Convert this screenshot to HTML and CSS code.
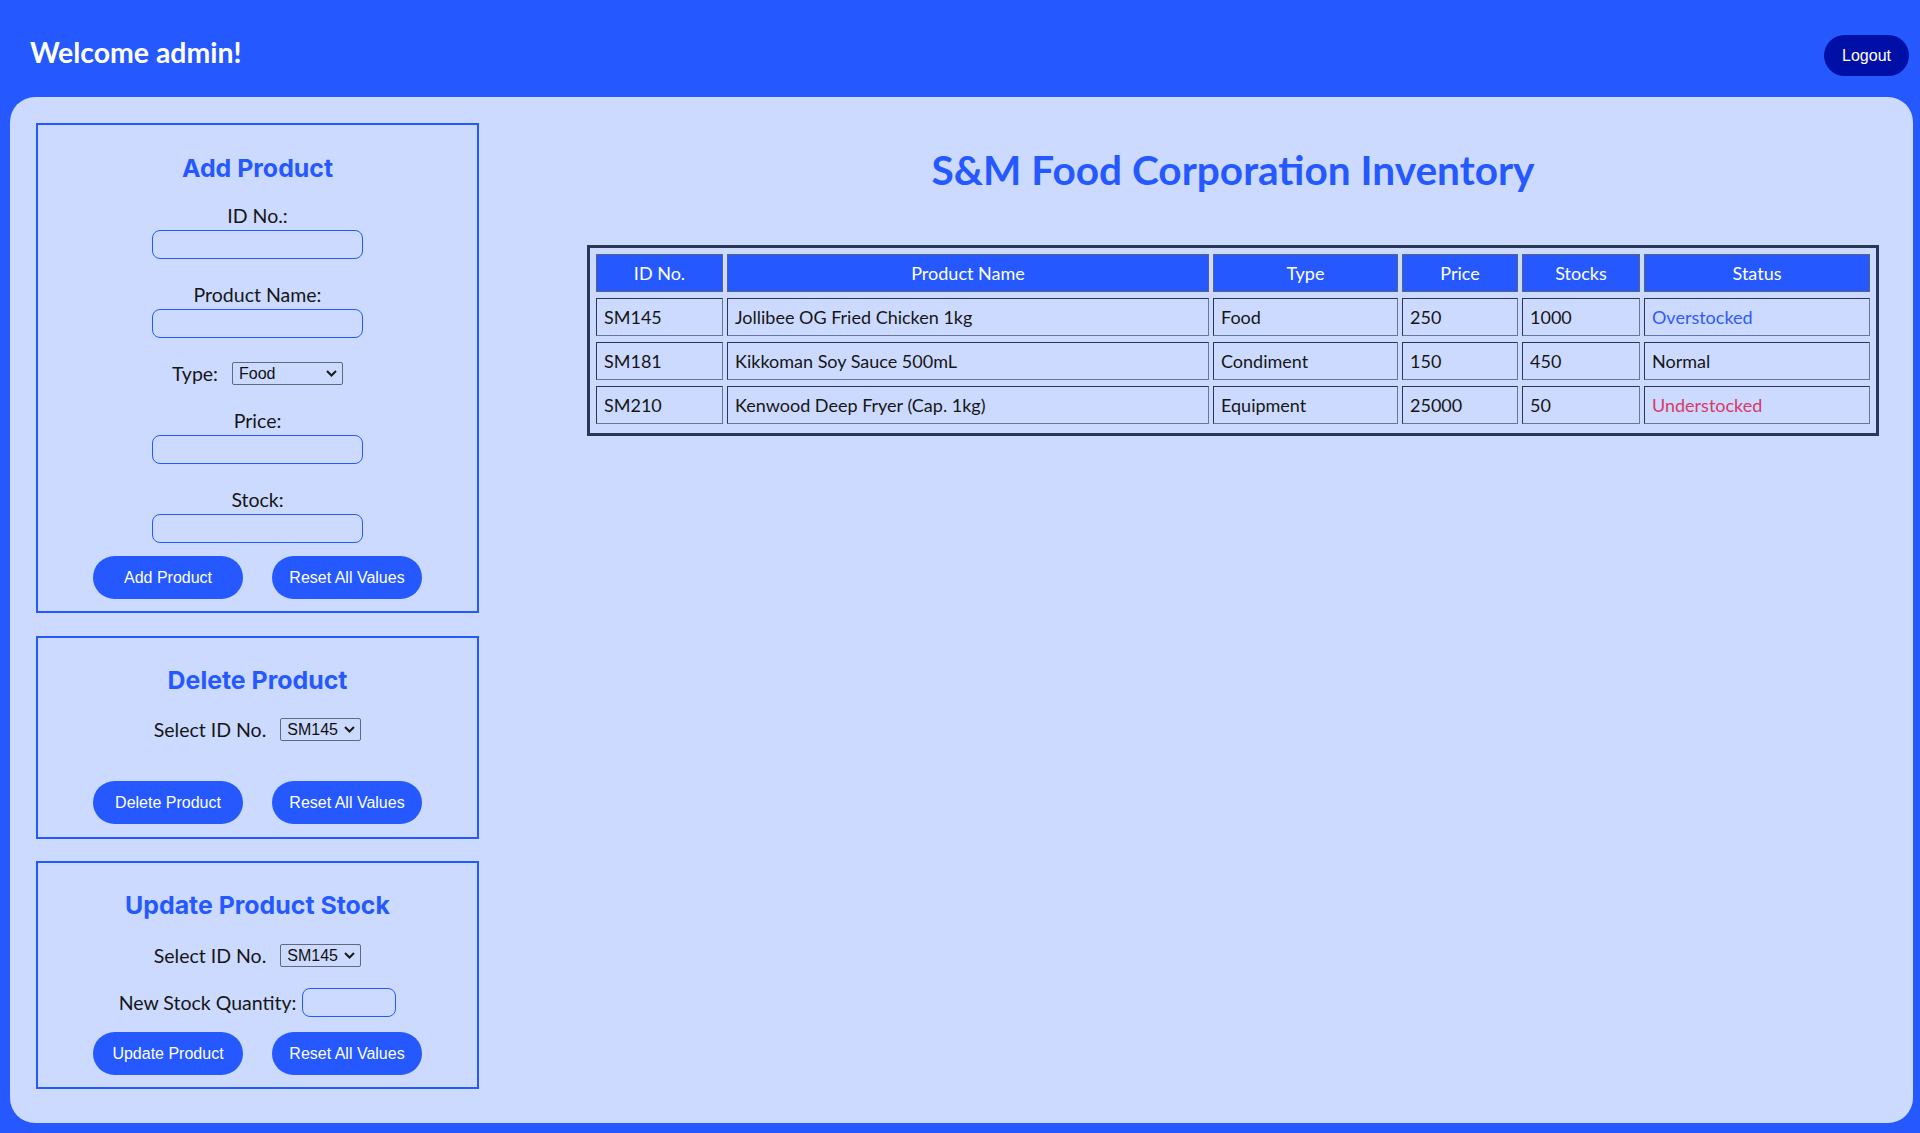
FILE: index.html
```html
<!DOCTYPE html>
<html lang="en">
<head>
<meta charset="utf-8">
<title>S&amp;M Food Corporation Inventory</title>
<link rel="stylesheet" href="styles.css">
</head>
<body>
<header class="topbar">
  <h1 class="welcome">Welcome admin!</h1>
  <button class="logout">Logout</button>
</header>
<main class="panel">
  <aside class="sidebar">
    <section class="card card-add">
      <h2 class="card-title title-add">Add Product</h2>
      <div class="field">
        <label class="field-label">ID No.:</label>
        <input class="text-input" type="text">
      </div>
      <div class="field spaced">
        <label class="field-label">Product Name:</label>
        <input class="text-input" type="text">
      </div>
      <div class="inline-row spaced">
        <label class="field-label">Type:</label>
        <span class="select-wrap">
          <select class="select select-type"><option>Food</option><option>Condiment</option><option>Equipment</option></select>
          <svg class="chevron" width="11" height="7" viewBox="0 0 11 7"><path d="M1 1l4.5 4.5L10 1" fill="none" stroke="#1a1a1a" stroke-width="2"/></svg>
        </span>
      </div>
      <div class="field spaced">
        <label class="field-label">Price:</label>
        <input class="text-input" type="text">
      </div>
      <div class="field spaced">
        <label class="field-label">Stock:</label>
        <input class="text-input" type="text">
      </div>
      <div class="actions actions-add">
        <button class="btn">Add Product</button>
        <button class="btn">Reset All Values</button>
      </div>
    </section>

    <section class="card card-delete">
      <h2 class="card-title">Delete Product</h2>
      <div class="inline-row row-select">
        <label class="field-label">Select ID No.</label>
        <span class="select-wrap">
          <select class="select select-id"><option>SM145</option><option>SM181</option><option>SM210</option></select>
          <svg class="chevron" width="11" height="7" viewBox="0 0 11 7"><path d="M1 1l4.5 4.5L10 1" fill="none" stroke="#1a1a1a" stroke-width="2"/></svg>
        </span>
      </div>
      <div class="actions actions-delete">
        <button class="btn">Delete Product</button>
        <button class="btn">Reset All Values</button>
      </div>
    </section>

    <section class="card card-update">
      <h2 class="card-title">Update Product Stock</h2>
      <div class="inline-row row-select-update">
        <label class="field-label">Select ID No.</label>
        <span class="select-wrap">
          <select class="select select-id"><option>SM145</option><option>SM181</option><option>SM210</option></select>
          <svg class="chevron" width="11" height="7" viewBox="0 0 11 7"><path d="M1 1l4.5 4.5L10 1" fill="none" stroke="#1a1a1a" stroke-width="2"/></svg>
        </span>
      </div>
      <div class="inline-row row-qty">
        <label class="field-label">New Stock Quantity:</label>
        <input class="qty-input" type="text">
      </div>
      <div class="actions actions-update">
        <button class="btn">Update Product</button>
        <button class="btn">Reset All Values</button>
      </div>
    </section>
  </aside>

  <section class="content">
    <h1 class="title">S&amp;M Food Corporation Inventory</h1>
    <table class="inventory">
      <thead>
        <tr>
          <th class="c-id">ID No.</th>
          <th class="c-name">Product Name</th>
          <th class="c-type">Type</th>
          <th class="c-price">Price</th>
          <th class="c-stock">Stocks</th>
          <th class="c-status">Status</th>
        </tr>
      </thead>
      <tbody>
        <tr>
          <td>SM145</td>
          <td>Jollibee OG Fried Chicken 1kg</td>
          <td>Food</td>
          <td>250</td>
          <td>1000</td>
          <td class="status-over">Overstocked</td>
        </tr>
        <tr>
          <td>SM181</td>
          <td>Kikkoman Soy Sauce 500mL</td>
          <td>Condiment</td>
          <td>150</td>
          <td>450</td>
          <td>Normal</td>
        </tr>
        <tr>
          <td>SM210</td>
          <td>Kenwood Deep Fryer (Cap. 1kg)</td>
          <td>Equipment</td>
          <td>25000</td>
          <td>50</td>
          <td class="status-under">Understocked</td>
        </tr>
      </tbody>
    </table>
  </section>
</main>
</body>
</html>
```
FILE: styles.css
```css
* { box-sizing: border-box; }

body {
  margin: 0;
  background: #2559ff;
  font-family: Lato, "Noto Sans", sans-serif;
  color: #161616;
}

.topbar {
  height: 97px;
  display: flex;
  justify-content: space-between;
  align-items: flex-start;
  padding: 35px 11px 0 30px;
}

.welcome {
  margin: 0;
  font-size: 28.4px;
  line-height: 35px;
  font-weight: 700;
  color: #fff;
}

.logout {
  width: 85px;
  height: 41px;
  border: none;
  border-radius: 21px;
  background: #0010a6;
  color: #fff;
  font: 16px "Liberation Sans", Arial, sans-serif;
}

.panel {
  margin: 0 7px 0 10px;
  background: #ccdaff;
  border-radius: 25px;
  display: flex;
  padding: 26px 0 34px 26px;
}

.sidebar {
  width: 443px;
  flex: none;
  display: flex;
  flex-direction: column;
}

.card {
  border: 2px solid #2559ff;
  display: flex;
  flex-direction: column;
  align-items: center;
}

.card-add { padding: 28px 0 12px; }
.card-delete { margin-top: 23px; padding: 27px 0 13px; }
.card-update { margin-top: 22px; padding: 27px 0 12px; }

.card-title {
  margin: 0;
  font-family: Inter, sans-serif;
  font-weight: 700;
  font-size: 24.9px;
  line-height: 30px;
  color: #2559ff;
}

.title-add { margin-bottom: 21px; }

.field {
  display: flex;
  flex-direction: column;
  align-items: center;
}

.spaced { margin-top: 24px; }

.field-label {
  font-size: 19.5px;
  line-height: 24px;
  color: #161616;
}

.text-input {
  margin-top: 2px;
  width: 211px;
  height: 29px;
  border: 1px solid #2559ff;
  border-radius: 8px;
  background: transparent;
}

.inline-row {
  display: flex;
  align-items: center;
  gap: 14px;
  height: 23px;
}

.row-select { margin-top: 23px; }
.row-select-update { margin-top: 24px; }
.row-qty { margin-top: 21px; height: 29px; gap: 6px; }

.qty-input {
  width: 94px;
  height: 29px;
  border: 1px solid #2559ff;
  border-radius: 8px;
  background: transparent;
}

.select-wrap {
  position: relative;
  display: inline-flex;
}

.select {
  appearance: none;
  -webkit-appearance: none;
  height: 23px;
  border: 1px solid #62697a;
  border-radius: 2px;
  background: transparent;
  font: 16px "Liberation Sans", Arial, sans-serif;
  color: #111;
  padding: 0 0 0 6px;
}

.chevron {
  position: absolute;
  right: 6px;
  top: 8px;
  pointer-events: none;
}

.select-type { width: 111px; }
.select-id { width: 81px; }

.actions {
  display: flex;
  gap: 29px;
}

.actions-add { margin-top: 13px; }
.actions-delete { margin-top: 40px; }
.actions-update { margin-top: 15px; }

.btn {
  width: 150px;
  height: 43px;
  border: none;
  border-radius: 22px;
  background: #2559ff;
  color: #fff;
  font: 16px "Liberation Sans", Arial, sans-serif;
}

.content {
  flex: 1;
  margin-left: 74px;
  display: flex;
  flex-direction: column;
  align-items: center;
}

.title {
  margin: 23px 0 0;
  font-size: 40.6px;
  line-height: 48px;
  font-weight: 700;
  color: #2559ff;
}

.inventory {
  margin-top: 51px;
  width: 1292px;
  table-layout: fixed;
  border: 3px solid #2b3757;
  border-spacing: 4px 6px;
  padding: 0 2px 3px;
  font-size: 18px;
}

.inventory th,
.inventory td {
  height: 38px;
  padding: 0 7px;
  text-align: left;
}

.inventory th {
  background: #2559ff;
  color: #fff;
  font-weight: 400;
  text-align: center;
  border: 1px solid #59638a;
}

.inventory td {
  border: 1px solid;
  border-color: #2d3454 #6676a3 #6676a3 #2d3454;
  color: #161616;
}

.c-id { width: 127px; }
.c-name { width: 482px; }
.c-type { width: 185px; }
.c-price { width: 116px; }
.c-stock { width: 118px; }
.c-status { width: 226px; }

.inventory td.status-over { color: #2f5bff; }
.inventory td.status-under { color: #d63b65; }
```
